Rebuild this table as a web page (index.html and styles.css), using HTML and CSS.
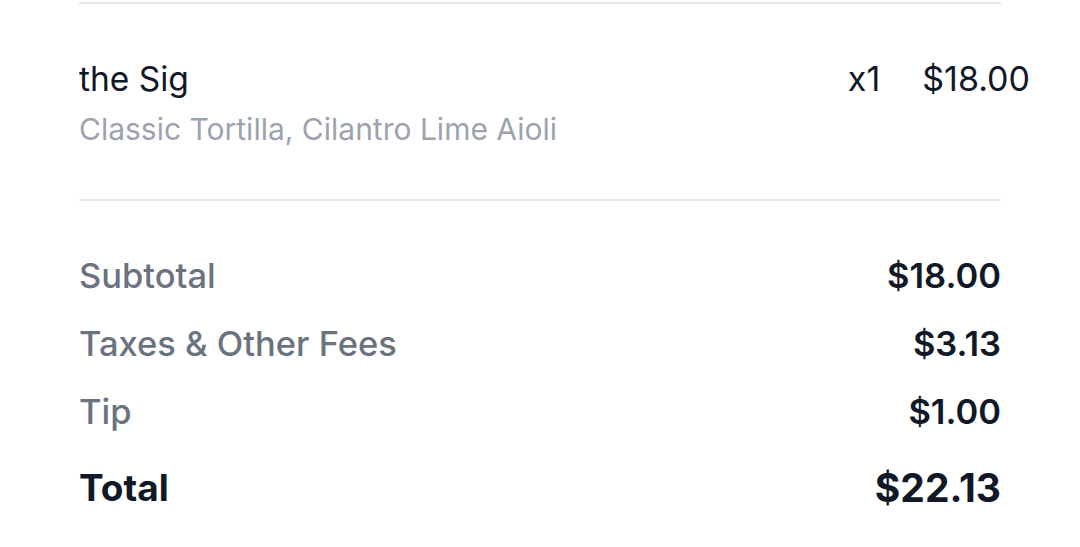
FILE: index.html
```html
<!DOCTYPE html>
<html>
<head>
<meta charset="utf-8">
<link rel="stylesheet" href="styles.css">
</head>
<body>
<div class="receipt">
  <div class="divider"></div>
  <div class="item">
    <div class="item-info">
      <div class="item-name">the Sig</div>
      <div class="item-mods">Classic Tortilla, Cilantro Lime Aioli</div>
    </div>
    <div class="item-meta">
      <span class="qty">x1</span>
      <span class="price">$18.00</span>
    </div>
  </div>
  <div class="divider"></div>
  <div class="summary">
    <div class="row"><span class="label">Subtotal</span><span class="value">$18.00</span></div>
    <div class="row"><span class="label">Taxes &amp; Other Fees</span><span class="value">$3.13</span></div>
    <div class="row"><span class="label">Tip</span><span class="value">$1.00</span></div>
    <div class="row total"><span class="label">Total</span><span class="value">$22.13</span></div>
  </div>
</div>
</body>
</html>
```

FILE: styles.css
```css
html, body {
  margin: 0;
  padding: 0;
  background: #ffffff;
}
body {
  font-family: Inter, "Noto Sans", sans-serif;
  color: #111827;
}
.receipt {
  padding: 2px 79px 0 79px;
}
.divider {
  height: 2px;
  background: #e5e7eb;
}
.item {
  display: flex;
  justify-content: space-between;
  align-items: flex-start;
  margin-right: -29px;
  padding: 53px 0 52px 0;
}
.item-name {
  font-size: 33.5px;
  line-height: 44px;
  font-weight: 400;
  color: #111827;
}
.item-mods {
  font-size: 30px;
  line-height: 36px;
  margin-top: 10px;
  color: #9ca3af;
}
.item-meta {
  display: flex;
  gap: 42px;
  font-size: 34px;
  line-height: 44px;
  color: #111827;
}
.summary {
  display: flex;
  flex-direction: column;
  padding-top: 40px;
}
.row {
  display: flex;
  justify-content: space-between;
  align-items: center;
  height: 68px;
  font-size: 34.5px;
  font-weight: 500;
}
.row .label {
  color: #6b7280;
}
.row .value {
  color: #111827;
  font-weight: 600;
}
.row.total {
  height: 84px;
  font-size: 37px;
}
.row.total .label {
  color: #111827;
  font-weight: 700;
}
.row.total .value {
  font-size: 39px;
  font-weight: 700;
}
```
